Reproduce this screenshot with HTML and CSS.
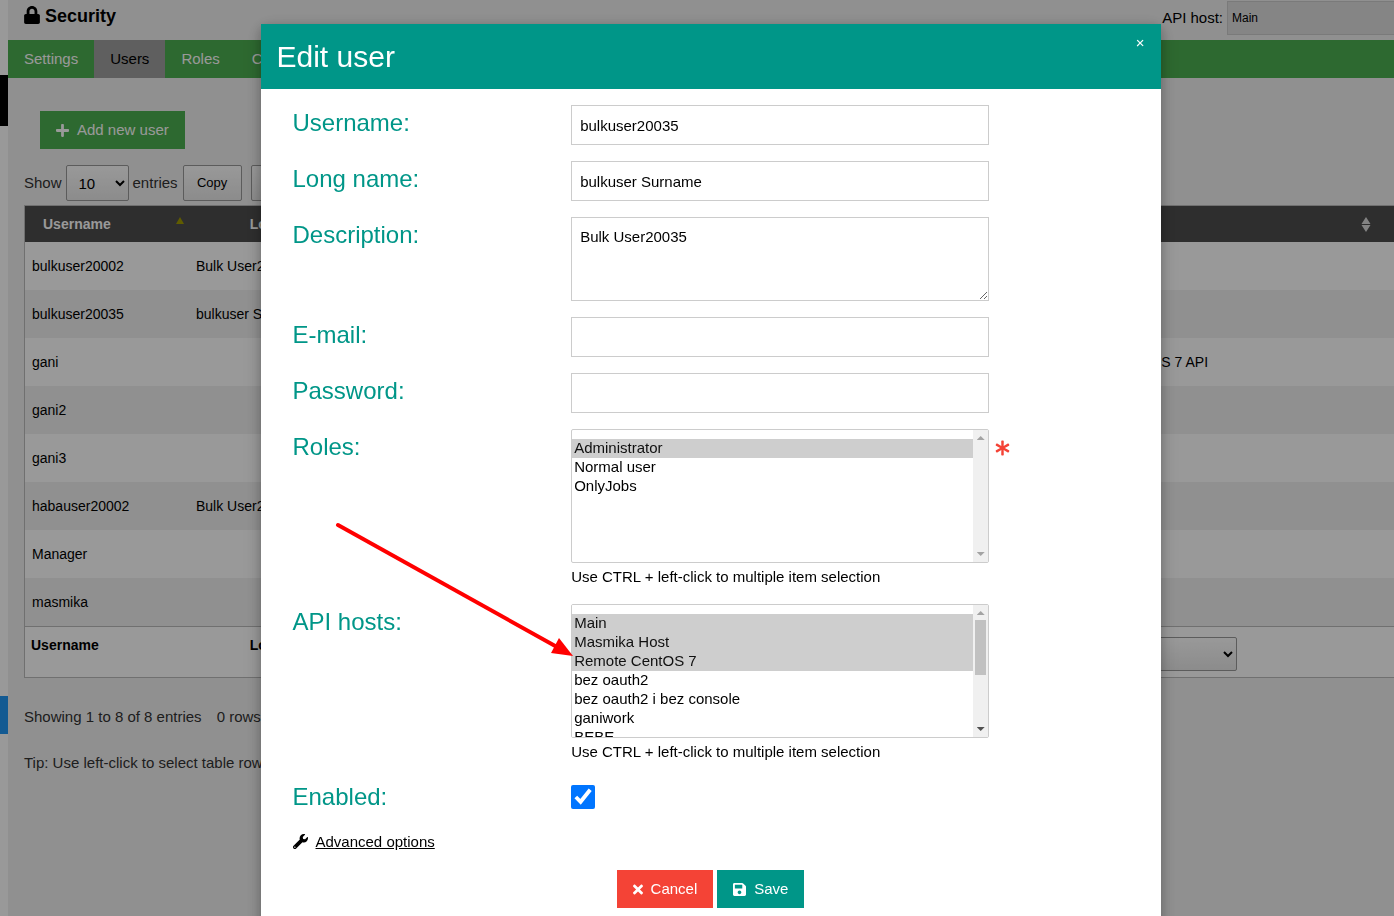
FILE: index.html
```html
<!DOCTYPE html>
<html lang="en">
<head>
<meta charset="utf-8">
<title>Security</title>
<link rel="stylesheet" href="styles.css">
</head>
<body>
<div class="app">
  <aside class="sidebar"><div class="sidebar-dark"></div><div class="sidebar-blue"></div></aside>
  <main class="main">
    <header class="topbar">
      <h1 class="page-title">
        <svg class="icon-lock" viewBox="0 0 448 512" aria-hidden="true"><path d="M400 224h-24v-72C376 68.200 307.800 0 224 0S72 68.200 72 152v72H48c-26.500 0-48 21.500-48 48v192c0 26.500 21.500 48 48 48h352c26.500 0 48-21.500 48-48V272c0-26.500-21.500-48-48-48zm-104 0H152v-72c0-39.700 32.300-72 72-72s72 32.300 72 72v72z"/></svg>
        Security
      </h1>
      <div class="host">
        <label for="host">API host:</label>
        <select id="host" class="host-select"><option>Main</option></select>
      </div>
    </header>
    <nav class="tabs">
      <button class="tab">Settings</button>
      <button class="tab tab-active">Users</button>
      <button class="tab">Roles</button>
      <button class="tab">Consoles</button>
    </nav>
    <section class="content">
      <button class="btn btn-green">
        <svg class="icon-plus" viewBox="0 0 448 512" aria-hidden="true"><path d="M416 208H272V64c0-17.670-14.330-32-32-32h-32c-17.670 0-32 14.330-32 32v144H32c-17.670 0-32 14.330-32 32v32c0 17.670 14.330 32 32 32h144v144c0 17.670 14.330 32 32 32h32c17.670 0 32-14.330 32-32V304h144c17.670 0 32-14.330 32-32v-32c0-17.670-14.330-32-32-32z"/></svg>
        Add new user
      </button>
      <div class="toolbar">
        <label for="length">Show</label>
        <select id="length" class="grad length"><option>10</option></select>
        <span>entries</span>
        <button class="grad tool">Copy</button>
        <button class="grad tool tool-next">CSV</button>
      </div>
      <table class="users">
        <colgroup><col class="col-user"><col class="col-long"><col><col class="col-hosts"></colgroup>
        <thead>
          <tr>
            <th class="left"><span class="th-flex">Username<span class="sort-up"></span></span></th>
            <th>Long name</th><th></th>
            <th><span class="th-end"><svg class="icon-sort" viewBox="0 0 10 16" aria-hidden="true"><path d="M5 0L9.500 7H.5zM5 15L9.500 8H.5z"/></svg></span></th>
          </tr>
        </thead>
        <tbody>
          <tr><td>bulkuser20002</td><td>Bulk User20002</td><td></td><td></td></tr>
          <tr><td>bulkuser20035</td><td>bulkuser Surname</td><td></td><td></td></tr>
          <tr><td>gani</td><td></td><td></td><td>Remote CentOS 7 API</td></tr>
          <tr><td>gani2</td><td></td><td></td><td></td></tr>
          <tr><td>gani3</td><td></td><td></td><td></td></tr>
          <tr><td>habauser20002</td><td>Bulk User20002</td><td></td><td></td></tr>
          <tr><td>Manager</td><td></td><td></td><td></td></tr>
          <tr><td>masmika</td><td></td><td></td><td></td></tr>
        </tbody>
        <tfoot>
          <tr><th class="left">Username</th><th>Long name</th><th></th><th class="left"><select class="grad filter" aria-label="Filter"><option></option></select></th></tr>
        </tfoot>
      </table>
      <p class="info"><span>Showing 1 to 8 of 8 entries</span><span>0 rows selected</span></p>
      <p class="tip">Tip: Use left-click to select table row.</p>
    </section>
  </main>
</div>

<div class="overlay">
  <div class="modal" role="dialog" aria-labelledby="dlg-title">
    <header class="modal-head">
      <h2 id="dlg-title" class="modal-title">Edit user</h2>
      <button class="close" aria-label="Close">×</button>
    </header>
    <form class="form">
      <div class="row">
        <label for="f-user">Username:</label>
        <input id="f-user" class="field" type="text" value="bulkuser20035">
      </div>
      <div class="row">
        <label for="f-long">Long name:</label>
        <input id="f-long" class="field" type="text" value="bulkuser Surname">
      </div>
      <div class="row">
        <label for="f-desc">Description:</label>
        <textarea id="f-desc" class="field area">Bulk User20035</textarea>
      </div>
      <div class="row">
        <label for="f-mail">E-mail:</label>
        <input id="f-mail" class="field" type="text">
      </div>
      <div class="row">
        <label for="f-pass">Password:</label>
        <input id="f-pass" class="field" type="password">
      </div>
      <div class="row">
        <label for="f-roles">Roles:</label>
        <div class="list-wrap">
          <select id="f-roles" class="list" multiple>
            <option selected>Administrator</option>
            <option>Normal user</option>
            <option>OnlyJobs</option>
          </select>
          <div class="bar" aria-hidden="true"><span class="bar-up"></span><span class="bar-down bar-off"></span></div>
          <p class="hint">Use CTRL + left-click to multiple item selection</p>
        </div>
        <svg class="icon-star" viewBox="0 0 512 512" aria-hidden="true"><path d="M478.210 334.093L336 256l142.210-78.093c11.795-6.477 15.961-21.384 9.232-33.037l-19.480-33.741c-6.728-11.653-21.720-15.499-33.227-8.523L296 186.718l3.475-162.204C299.763 11.061 288.937 0 275.480 0h-38.960c-13.456 0-24.283 11.061-23.994 24.514L216 186.718 77.265 102.607c-11.506-6.976-26.499-3.130-33.227 8.523l-19.480 33.741c-6.728 11.653-2.562 26.560 9.233 33.037L176 256 33.790 334.093c-11.795 6.477-15.961 21.384-9.232 33.037l19.480 33.741c6.728 11.653 21.721 15.499 33.227 8.523L216 325.282l-3.475 162.204C212.237 500.939 223.064 512 236.520 512h38.961c13.456 0 24.283-11.061 23.995-24.514L296 325.282l138.735 84.111c11.506 6.976 26.499 3.130 33.227-8.523l19.480-33.741c6.728-11.653 2.563-26.559-9.232-33.036z"/></svg>
      </div>
      <div class="row">
        <label for="f-hosts">API hosts:</label>
        <div class="list-wrap">
          <select id="f-hosts" class="list list-long" multiple>
            <option selected>Main</option>
            <option selected>Masmika Host</option>
            <option selected>Remote CentOS 7</option>
            <option>bez oauth2</option>
            <option>bez oauth2 i bez console</option>
            <option>ganiwork</option>
            <option>BEBE</option>
          </select>
          <div class="bar" aria-hidden="true"><span class="bar-up"></span><span class="bar-thumb"></span><span class="bar-down"></span></div>
          <p class="hint">Use CTRL + left-click to multiple item selection</p>
        </div>
      </div>
      <div class="row">
        <label for="f-on">Enabled:</label>
        <input id="f-on" class="check" type="checkbox" checked>
      </div>
      <div class="advanced">
        <svg class="icon-wrench" viewBox="0 0 512 512" aria-hidden="true"><path d="M507.730 109.100c-2.240-9.030-13.540-12.090-20.120-5.510l-74.360 74.360-67.880-11.310-11.310-67.880 74.360-74.360c6.620-6.620 3.430-17.900-5.660-20.160-47.380-11.740-99.550.910-136.580 37.930-39.640 39.640-50.550 97.100-34.050 147.200L18.740 402.760c-24.990 24.990-24.990 65.510 0 90.500 24.990 24.990 65.510 24.990 90.500 0l213.210-213.210c50.120 16.710 107.470 5.680 147.370-34.220 37.070-37.070 49.700-89.320 37.910-136.730zM64 472c-13.250 0-24-10.750-24-24 0-13.260 10.750-24 24-24s24 10.740 24 24c0 13.250-10.750 24-24 24z"/></svg>
        <a href="#">Advanced options</a>
      </div>
      <div class="actions">
        <button type="button" class="btn btn-red">
          <svg class="icon-x" viewBox="0 0 352 512" aria-hidden="true"><path d="M242.720 256l100.070-100.070c12.280-12.280 12.280-32.190 0-44.480l-22.240-22.240c-12.280-12.280-32.190-12.280-44.480 0L176 189.280 75.930 89.210c-12.280-12.280-32.190-12.280-44.480 0L9.210 111.450c-12.280 12.280-12.280 32.190 0 44.480L109.280 256 9.210 356.070c-12.280 12.280-12.280 32.190 0 44.480l22.240 22.240c12.280 12.280 32.200 12.280 44.480 0L176 322.720l100.070 100.070c12.280 12.280 32.200 12.280 44.480 0l22.240-22.240c12.280-12.280 12.280-32.190 0-44.480L242.720 256z"/></svg>
          Cancel
        </button>
        <button type="button" class="btn btn-teal">
          <svg class="icon-save" viewBox="0 0 448 512" aria-hidden="true"><path d="M433.941 129.941l-83.882-83.882A48 48 0 0 0 316.118 32H48C21.490 32 0 53.490 0 80v352c0 26.510 21.490 48 48 48h352c26.510 0 48-21.490 48-48V163.882a48 48 0 0 0-14.059-33.941zM224 416c-35.346 0-64-28.654-64-64 0-35.346 28.654-64 64-64s64 28.654 64 64c0 35.346-28.654 64-64 64zm96-304.520V212c0 6.627-5.373 12-12 12H76c-6.627 0-12-5.373-12-12V108c0-6.627 5.373-12 12-12h228.520c3.183 0 6.235 1.264 8.485 3.515l3.480 3.480A11.996 11.996 0 0 1 320 111.480z"/></svg>
          Save
        </button>
      </div>
    </form>
    <svg class="arrow" viewBox="0 0 240 136" aria-hidden="true"><path class="arrow-line" d="M3 3L222 125"/><path class="arrow-tip" d="M238 134L224 116L216 131z"/></svg>
  </div>
</div>
</body>
</html>
```
FILE: styles.css
```css
*, *::before, *::after { box-sizing: border-box; }
body {
  margin: 0;
  overflow: hidden;
  background: #f1f1f1;
  color: #000;
  font: 15px/22px "Liberation Sans", Arial, sans-serif;
}
button, input, select, textarea { font: inherit; color: inherit; margin: 0; }
input, select { line-height: normal; }
h1, h2, p { margin: 0; }
svg { fill: currentColor; flex: none; }

.app { display: flex; min-height: 100vh; }
.sidebar { width: 8px; flex: none; background: #fff; padding-top: 75px; }
.sidebar-dark { height: 51px; background: #000; }
.sidebar-blue { height: 38px; margin-top: 570px; background: #2196f3; }
.main { flex: 1; min-width: 0; }

.topbar { display: flex; justify-content: space-between; height: 40px; padding-left: 16px; }
.page-title { display: flex; gap: 5px; padding-top: 5px; font-size: 18px; line-height: 22px; }
.icon-lock { width: 16px; height: 18px; margin-top: 1px; }
.host { display: flex; gap: 4px; padding-top: 1px; line-height: 34px; }
.host-select {
  appearance: none;
  width: 167px;
  height: 34px;
  padding: 0 4px;
  border: 1px solid #ccc;
  border-right: 0;
  border-radius: 0;
  background: #dedede;
  font-size: 12px;
}

.tabs { display: flex; background: #4caf50; }
.tab { padding: 8px 16px; border: 0; background: none; color: #fff; }
.tab-active { background: #9e9e9e; color: #000; }

.content { padding: 33px 0 0 16px; }
.btn { display: inline-flex; align-items: center; gap: 8px; height: 38px; padding: 0 16px; border: 0; color: #fff; }
.btn-green { margin-left: 16px; background: #4caf50; }
.btn-red { background: #f44336; }
.btn-teal { background: #009688; }
.icon-plus { width: 13px; height: 15px; }
.icon-x { width: 10px; height: 15px; }
.icon-save { width: 13px; height: 15px; }

.toolbar { display: flex; align-items: center; gap: 4px; margin-top: 16px; color: #333; }
.grad {
  border: 1px solid #999;
  border-radius: 2px;
  background: linear-gradient(#fff, #e9e9e9);
  color: #000;
}
.length { width: 63px; height: 36px; padding: 0 8px; }
.tool { width: 59px; height: 36px; padding: 0; font-size: 13px; }
.toolbar .tool { margin-left: 1px; }
.toolbar .tool-next { margin-left: 5px; }

.users {
  width: 100%;
  margin-top: 4px;
  table-layout: fixed;
  border-collapse: separate;
  border-spacing: 0;
  border: 1px solid #bbb;
  border-right: 0;
  font-size: 14px;
}
.col-user { width: 164px; }
.col-long { width: 196px; }
.col-hosts { width: 333px; }
.users th, .users td { padding: 0 7px; }
.users thead th { height: 36px; background: #4d4d4d; color: #fff; }
.users thead .left { padding-left: 18px; text-align: left; }
.th-flex { display: flex; justify-content: space-between; }
.th-end { display: flex; justify-content: flex-end; padding: 1px 16px 0 0; }
.sort-up {
  width: 8px;
  height: 7px;
  margin: 4px -2px 0 0;
  background: #a09a00;
  clip-path: polygon(50% 0, 100% 100%, 0 100%);
}
.icon-sort { width: 10px; height: 16px; opacity: .8; }
.users td { height: 48px; }
.users tbody tr:nth-child(odd) { background: #fff; }
.users tfoot th { height: 51px; padding: 7px 6px 0; border-top: 1px solid #bbb; background: #fff; vertical-align: top; }
.users tfoot .left { text-align: left; }
.filter { display: block; width: 170px; height: 34px; margin-top: 3px; }
.info { display: flex; gap: 15px; margin-top: 28px; color: #333; }
.tip { margin-top: 24px; color: #333; }

.overlay {
  position: fixed;
  inset: 0;
  display: flex;
  justify-content: center;
  align-items: flex-start;
  padding: 24px 0 0 27px;
  overflow: hidden;
  background: rgba(0, 0, 0, .4);
}
.modal {
  position: relative;
  width: 100%;
  max-width: 900px;
  background: #fff;
  box-shadow: 0 4px 10px 0 rgba(0, 0, 0, .2), 0 4px 20px 0 rgba(0, 0, 0, .19);
}
.modal-head { display: flex; justify-content: space-between; align-items: flex-start; padding-left: 16px; background: #009688; color: #fff; }
.modal-title { padding: 10px 0; font-size: 30px; line-height: 45px; font-weight: 400; }
.close { padding: 8px 16px; border: 0; background: none; }

.form { display: flex; flex-direction: column; gap: 16px; padding: 16px 32px 32px; }
.row { display: grid; grid-template-columns: 2fr 3fr 1fr; align-items: start; }
.row label { color: #009688; font-size: 24px; line-height: 36px; }
.field { display: block; width: 100%; height: 40px; padding: 8px; border: 1px solid #ccc; background: #fff; }
.area { height: 84px; resize: vertical; }
.list-wrap { position: relative; }
.list {
  display: block;
  width: 100%;
  height: 134px;
  padding: 9px 0;
  border: 1px solid #ccc;
  border-radius: 2px;
  background: #fff;
  overflow-y: scroll;
}
.list option { height: 19px; padding: 0 2px 1px; }
.list-long { padding-bottom: 94px; }
.bar {
  position: absolute;
  top: 1px;
  right: 1px;
  display: flex;
  flex-direction: column;
  align-items: center;
  width: 15px;
  height: 132px;
  padding: 6px 0;
  background: #f0f0f0;
  pointer-events: none;
}
.bar-up, .bar-down { width: 8px; height: 4px; background: #a3a3a3; clip-path: polygon(50% 0, 100% 100%, 0 100%); }
.bar-down { margin-top: auto; background: #505050; clip-path: polygon(0 0, 100% 0, 50% 100%); }
.bar-off { background: #a3a3a3; }
.bar-thumb { width: 11px; height: 55px; margin-top: 5px; background: #c1c1c1; }
.hint { margin-top: 3px; }
.icon-star { width: 15px; height: 16px; margin: 11px 0 0 6px; color: #f44336; }
.check { width: 24px; height: 24px; margin-top: 6px; }
.advanced { display: flex; align-items: flex-start; gap: 8px; height: 23px; }
.advanced a { color: #000; }
.icon-wrench { width: 15px; height: 15px; margin-top: 3px; }
.actions { display: flex; justify-content: center; gap: 4px; }

.arrow { position: absolute; left: 74px; top: 498px; width: 240px; height: 136px; }
.arrow-line { fill: none; stroke: #f00; stroke-width: 4; stroke-linecap: round; }
.arrow-tip { fill: #f00; }
```
